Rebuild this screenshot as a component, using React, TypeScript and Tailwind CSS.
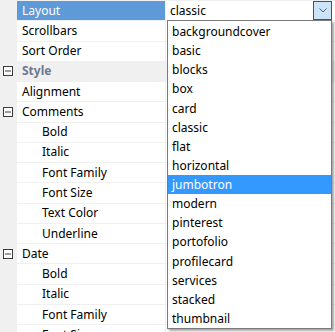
import { Fragment } from "react";

type Row = {
  label: string;
  selected?: boolean;
  category?: boolean;
  toggle?: boolean;
  indent?: boolean;
};

const rows: Row[] = [
  { label: "Layout", selected: true },
  { label: "Scrollbars" },
  { label: "Sort Order" },
  { label: "Style", category: true, toggle: true },
  { label: "Alignment" },
  { label: "Comments", toggle: true },
  { label: "Bold", indent: true },
  { label: "Italic", indent: true },
  { label: "Font Family", indent: true },
  { label: "Font Size", indent: true },
  { label: "Text Color", indent: true },
  { label: "Underline", indent: true },
  { label: "Date", toggle: true },
  { label: "Bold", indent: true },
  { label: "Italic", indent: true },
  { label: "Font Family", indent: true },
  { label: "Font Size", indent: true },
];

const options = [
  "backgroundcover",
  "basic",
  "blocks",
  "box",
  "card",
  "classic",
  "flat",
  "horizontal",
  "jumbotron",
  "modern",
  "pinterest",
  "portofolio",
  "profilecard",
  "services",
  "stacked",
  "thumbnail",
];

function MinusBox() {
  return (
    <svg width="10" height="10" viewBox="0 0 10 10" className="block">
      <rect x="0.5" y="0.5" width="9" height="9" fill="#fff" stroke="#3c3c3c" />
      <line x1="2" y1="5" x2="8" y2="5" stroke="#3c3c3c" />
    </svg>
  );
}

export default function App() {
  return (
    <div
      className="relative h-[332px] w-[335px] overflow-hidden bg-white text-[12px] text-black"
      style={{ fontFamily: '"Noto Sans", "Open Sans", sans-serif' }}
    >
      <div className="flex flex-col">
        {rows.map((row, i) => (
          <div key={i} className="flex h-[20.27px] shrink-0 border-t border-[#f0f0f0]">
            <div className="flex w-[17px] shrink-0 items-center justify-center pr-[1px] bg-[#f0f0f0]">
              {row.toggle && <MinusBox />}
            </div>
            <div
              className={
                "flex w-[149px] shrink-0 items-center border-r border-[#f0f0f0] leading-none " +
                (row.selected
                  ? "bg-[#5e9ad7] text-white"
                  : row.category
                    ? "bg-[#f0f0f0] font-bold text-[#6b7a90]"
                    : "bg-white") +
                (row.indent ? " pl-[25px]" : " pl-[5px]")
              }
            >
              {row.label}
            </div>
            <div className={"flex flex-1 items-center " + (row.category ? "bg-[#f0f0f0]" : "bg-white")}>
              {row.selected && (
                <Fragment>
                  <span className="flex-1 pl-[4px] leading-none">classic</span>
                  <div className="flex h-full w-[19px] items-center justify-center border border-[#0a64ad] bg-[#cce4f7]">
                    <svg width="8" height="5" viewBox="0 0 8 5">
                      <polyline points="0.5,0.5 4,4 7.5,0.5" fill="none" stroke="#606060" strokeWidth="1" />
                    </svg>
                  </div>
                  <div className="w-[3px]" />
                </Fragment>
              )}
            </div>
          </div>
        ))}
      </div>

      <div className="absolute left-[167px] top-[20px] w-[165px] border border-[#7a7a7a] bg-white pt-[1px] shadow-[2px_2px_2px_rgba(0,0,0,0.35)]">
        {options.map((opt) => (
          <div
            key={opt}
            className={
              "flex h-[19.13px] items-center pl-[4px] pt-[1px] leading-none " +
              (opt === "jumbotron" ? "bg-[#3399ff] text-white" : "")
            }
          >
            {opt}
          </div>
        ))}
      </div>
    </div>
  );
}
